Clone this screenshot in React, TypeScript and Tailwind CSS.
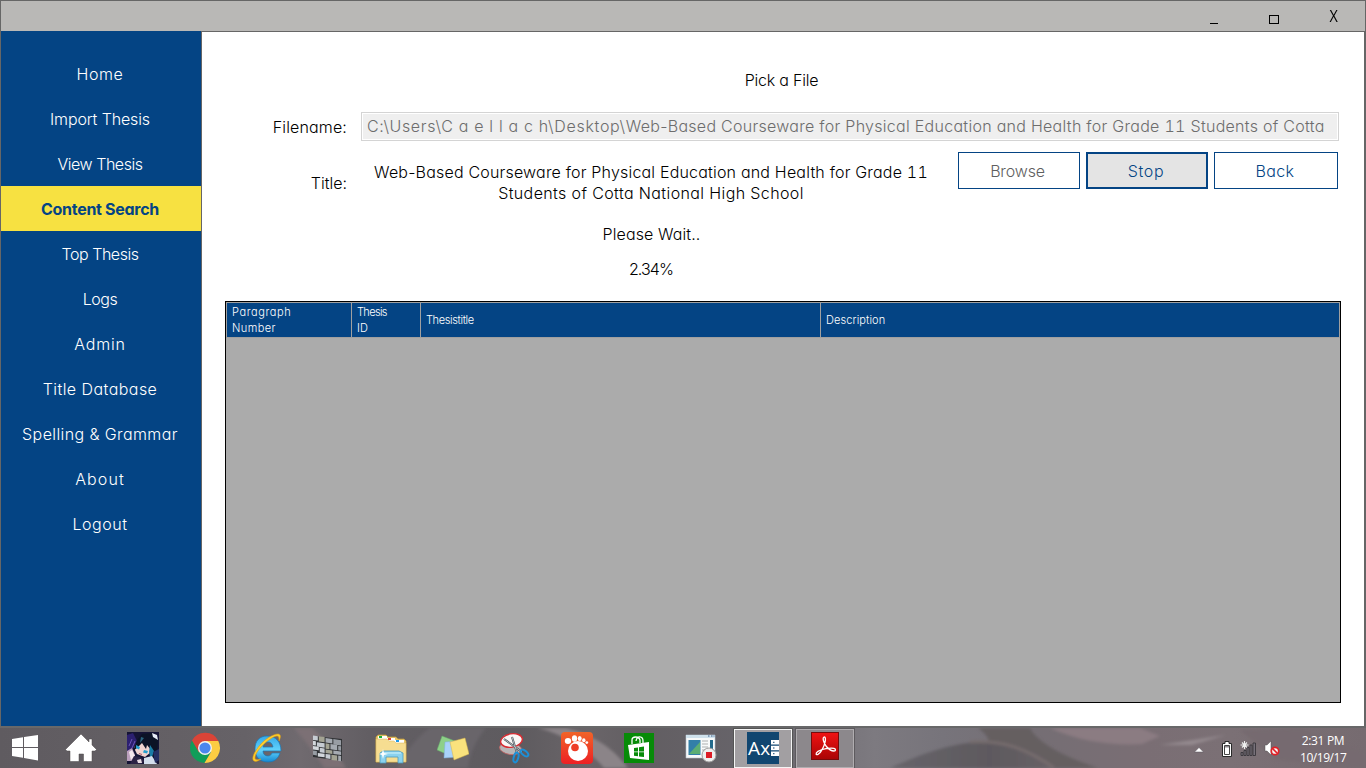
import type { ReactNode } from "react";

const navItems = [
  { label: "Home", tracking: "tracking-[0.6px]" },
  { label: "Import Thesis", tracking: "tracking-[-0.13px]" },
  { label: "View Thesis", tracking: "tracking-[-0.47px]" },
  { label: "Content Search", tracking: "tracking-[-0.3px]", active: true },
  { label: "Top Thesis", tracking: "tracking-[-0.46px]" },
  { label: "Logs", tracking: "tracking-[-0.5px]" },
  { label: "Admin", tracking: "tracking-[0.8px]" },
  { label: "Title Database", tracking: "tracking-[0.45px]" },
  { label: "Spelling & Grammar", tracking: "tracking-[0.4px]" },
  { label: "About", tracking: "tracking-[1.1px]" },
  { label: "Logout", tracking: "tracking-[0.5px]" },
];

function TitleBar() {
  return (
    <header className="flex h-[31px] shrink-0 justify-end border border-b-0 border-[#666] bg-[#b9b8b6] text-black">
      <button className="flex w-[60px] items-end justify-center pb-[7px]" aria-label="Minimize">
        <span className="h-px w-2 bg-black" />
      </button>
      <button className="flex w-[60px] items-end justify-center pb-[7px]" aria-label="Maximize">
        <span className="h-[9px] w-[10px] border border-black" />
      </button>
      <button className="flex w-[60px] items-center justify-center leading-none">
        <span className="scale-x-90 font-['Open_Sans',sans-serif] text-[16px] font-normal">X</span>
      </button>
      <span className="w-px" />
    </header>
  );
}

function Sidebar() {
  return (
    <nav className="flex w-[202px] shrink-0 flex-col border-x border-[#666] bg-[#044484] pt-5 text-white">
      {navItems.map((n) => (
        <a
          key={n.label}
          className={
            n.active
              ? "flex h-[45px] items-center justify-center bg-[#f7e141] pr-[2px] font-bold text-[#044484]"
              : "flex h-[45px] items-center justify-center pr-[2px]"
          }
        >
          <span className={n.tracking}>{n.label}</span>
        </a>
      ))}
    </nav>
  );
}

function Eleven() {
  return <span className="[font-feature-settings:'tnum']">11</span>;
}

function SearchForm() {
  return (
    <section className="flex flex-col">
      <div className="flex h-6 w-[1159px] items-center justify-center tracking-[-0.22px]">Pick a File</div>
      <div className="mt-5 flex items-center">
        <label className="w-[145px] text-right tracking-[0.15px]">Filename:</label>
        <div className="ml-[14px] h-[29px] w-[978px] border border-[#d4d4d4] bg-white p-px">
          <div className="flex h-full items-center bg-[#efefef] pb-px pl-1 whitespace-pre text-[#6d6d6d]">
            <span className="tracking-[0.68px]">C:\Users\C a e l l a c h\Desktop\</span>
            <span className="tracking-[0.28px]">
              Web-Based Courseware for Physical Education and Health for Grade <Eleven /> Students of Cotta
            </span>
          </div>
        </div>
      </div>
      <div className="mt-[11px] flex">
        <span className="mt-[19px] w-[145px] text-right">Title:</span>
        <div className="ml-[14px] flex w-[580px] flex-col items-center text-center leading-[21px] whitespace-nowrap">
          <p className="mt-[10px] tracking-[0.19px]">
            Web-Based Courseware for Physical Education and Health for Grade <Eleven />
          </p>
          <p className="tracking-[0.38px]">Students of Cotta National High School</p>
          <p className="mt-5 pl-px tracking-[0.1px]">Please Wait..</p>
          <p className="mt-[14px] tracking-[-0.93px]">2.34%</p>
        </div>
        <div className="ml-[17px] flex h-[37px] gap-[6px] text-[#044484]">
          <button className="w-[122px] border border-[#044484] bg-white pr-[3px] tracking-[-0.15px] text-[#5f5f5f]">
            Browse
          </button>
          <button className="w-[122px] border-2 border-[#044484] bg-[#e4e4e4] pr-[2px] tracking-[0.7px]">Stop</button>
          <button className="w-[124px] border border-[#044484] bg-white pr-[2px] tracking-[0.35px]">Back</button>
        </div>
      </div>
    </section>
  );
}

function ResultsGrid() {
  return (
    <section className="ml-[23px] flex h-[402px] w-[1116px] flex-col border border-black bg-[#ababab]">
      <div className="flex h-[36px] border border-[#a0a0a0] bg-[#044484] text-[11px] leading-4 text-white">
        <div className="w-[125px] border-r border-[#a0a0a0] pt-px pl-[5px]">
          <p className="tracking-[0.6px]">Paragraph</p>
          <p className="tracking-[0.4px]">Number</p>
        </div>
        <div className="w-[69px] border-r border-[#a0a0a0] pt-px pl-[5px]">
          <p className="tracking-[-0.65px]">Thesis</p>
          <p>ID</p>
        </div>
        <div className="flex w-[400px] items-center border-r border-[#a0a0a0] pl-[5px] tracking-[-0.37px]">
          Thesistitle
        </div>
        <div className="flex items-center pl-[5px] tracking-[0.1px]">Description</div>
      </div>
    </section>
  );
}

function WindowsLogo() {
  return (
    <svg className="h-7 w-7" viewBox="0 0 28 28" fill="#fff">
      <path d="M1 5 12 3.300V13H1zM13 3.100 27 1v12H13zM1 14h11v9.700L1 22zM13 14h14v12.500L13 24z" />
    </svg>
  );
}

function HomeIcon() {
  return (
    <svg className="h-8 w-8" viewBox="0 0 32 32">
      <path
        d="M16 2 0.500 17.500l1.500 1.500h3V29.500h9V22h4.500v7.500H27V19h3l1.500-1.500-4.500-4.500V7h-3v3z"
        fill="#fff"
        stroke="#4c494b"
        strokeWidth=".5"
      />
    </svg>
  );
}

function AvatarIcon() {
  return (
    <svg className="h-8 w-8" viewBox="0 0 32 32">
      <rect width="32" height="32" fill="#151435" />
      <path d="M0 3 6 1 10 9 5 18 0 19z" fill="#2c2070" />
      <path d="M5 7 2 14M8 9 5 16" stroke="#7a62c9" strokeWidth=".8" />
      <path d="M9 12 14 7l9 5 1 8-6 5-8-3-3-6z" fill="#f0d3d0" />
      <path d="M10 8 15 2l10-1 6 6-1 16-5 3-1-8-4-5-1 4-4-6-5 5-4 3z" fill="#0c1326" />
      <path d="m23 13 4 6-3 9-2-8z" fill="#1a7da6" />
      <path d="m14 5 3 1-4 5z" fill="#2b6580" />
      <path d="m25 1 5 2 1 5-5-3z" fill="#e7edf7" />
      <path d="m9 13 4 2-1 2.500-3-1.500zM17 18l4 1-1 2.500-4-1z" fill="#249fce" />
      <path d="m0 19 5-3 3 7-1 6H0z" fill="#bba0bd" />
      <path d="m2 20 3-2 3 6-4 4z" fill="#f3e6ec" />
      <path d="m7 24 6 1 5 4-4 3H3z" fill="#2c2345" />
      <path d="m10 28 4-1 1 4h-4z" fill="#e9dde3" />
      <path d="m17 26 8-2 5 8H17z" fill="#d3deec" />
      <path d="m26 20 6-3v11l-4 3z" fill="#252f63" />
      <path d="m12 21.500 3 1" stroke="#a65b6d" />
    </svg>
  );
}

function ChromeIcon() {
  return (
    <svg className="h-8 w-8" viewBox="0 0 32 32">
      <path d="M3 8.500A15 15 0 0 0 15.500 31L22 20 16 16z" fill="#109d59" />
      <path d="M3 8.500 10 20.500 16 9H29.400A15 15 0 0 0 3 8.500" fill="#da4437" />
      <path d="M29.300 9H16l6 11-6.500 11A15 15 0 0 0 29.300 9" fill="#fccd42" />
      <circle cx="16" cy="16" r="7" fill="#f3f3f1" />
      <circle cx="16" cy="16" r="5.600" fill="#4a86ef" />
    </svg>
  );
}

function ExplorerIcon() {
  return (
    <svg className="h-8 w-8" viewBox="0 0 32 32">
      <defs>
        <linearGradient id="ie" x1="0" y1="0" x2="0" y2="1">
          <stop stopColor="#35a9e8" />
          <stop offset=".55" stopColor="#62d2fb" />
          <stop offset="1" stopColor="#1589d2" />
        </linearGradient>
      </defs>
      <path
        d="M16 4C8.500 4 4 9 4 17s5 13 13 13c6 0 10-3 12-9h-8c-1 2-2 3-4 3-3 0-5-2-5-5h18C30 10 25 4 16 4m-4 11c.5-3 2-5 5-5s4.500 2 5 5z"
        fill="url(#ie)"
        stroke="#1978b9"
        strokeWidth=".7"
      />
      <path
        d="M28 9c2-4 2-7-1-7-5 0-13 5-18 11C3 20 0 27 3 29c2 1 4 0 7-2-4 1-6 1-6-1 0-4 4-9 8-13 5-5 11-9 14-9 2 0 2 2 2 5"
        fill="#ffd02c"
        stroke="#db9b15"
        strokeWidth=".6"
      />
    </svg>
  );
}

const bricks = [
  "M1 1h5v5H1z", "M7 1h6v6H7z", "M14 2h7v5h-7z", "M22 2h8v6h-8z",
  "M1 7h3v5H1z", "M5 8h8v5H5z", "M14 8h4v6h-4z", "M19 8h7v6h-7z", "M27 9h3v5h-3z",
  "M1 13h6v4H1z", "M8 14h5v5H8z", "M14 15h7v4h-7z", "M22 15h8v4h-8z",
  "M1 18h4v5H1z", "M6 20h7v4H6z", "M14 20h5v5h-5z", "M20 20h6v6h-6z", "M27 20h3v6h-3z",
];
const brickFills = ["#c6cbd2", "#a5aab1", "#d3d7dc", "#a3a393", "#989da4"];

function WallIcon() {
  return (
    <svg className="mr-0.5 h-8 w-8" viewBox="0 0 32 32">
      <path d="m1 4 29 3v22L1 25z" fill="#2f3134" />
      <g transform="matrix(.97 .13 0 .88 0 2.500)">
        {bricks.map((d, i) => (
          <path key={d} d={d} fill={brickFills[(i * 3) % 5]} />
        ))}
      </g>
    </svg>
  );
}

function FolderIcon() {
  return (
    <svg className="h-8 w-8" viewBox="0 0 32 32">
      <path d="M1 5 3 3h8l2 2h8l2 2h6l2 2v21H1z" fill="#e7c669" stroke="#c49e3f" strokeWidth=".7" />
      <path d="M3 4h9v4H3zM12 6h8v4h-8zM20 8h9v4h-9z" fill="#fff" />
      <path d="M4 4h3v2H4z" fill="#18ae38" />
      <path d="M13 6h3v2h-3z" fill="#e24235" />
      <path d="M21 8h3v2h-3z" fill="#2299e2" />
      <path d="M1 7h11l2 2h5l2 2h10v19H1z" fill="#f6dd91" stroke="#d6b359" strokeWidth=".5" />
      <path
        d="M5 31V21l3-2h16l4 2v10h-5v-6H11v6z"
        fill="#8bd2ef"
        stroke="#4b9bbb"
        strokeWidth=".8"
      />
      <path d="M7 21h19" stroke="#d2f4fc" />
      <path d="m8 17 1 4 4 1-4 1-1 4-1-4-3-1 3-1z" fill="#fff" />
    </svg>
  );
}

function NotesIcon() {
  return (
    <svg className="h-8 w-8" viewBox="0 0 32 32">
      <path d="m5 4 13 5-4 15-14-6z" fill="#8ed088" stroke="#65ab6a" strokeWidth=".5" />
      <path d="m8 10 14-1-1 16-14 1z" fill="#a9d2fa" stroke="#7eb0db" strokeWidth=".5" />
      <path d="m13 10 15-4 4 16-15 6z" fill="#fae27d" stroke="#d0b24c" strokeWidth=".5" />
    </svg>
  );
}

function SnipIcon() {
  return (
    <svg className="h-8 w-8" viewBox="0 0 32 32">
      <ellipse cx="11.500" cy="16.500" rx="11" ry="6" fill="#b8b5b6" stroke="#c96464" strokeWidth=".8" transform="rotate(8 11.500 16.500)" />
      <ellipse cx="12.500" cy="8.500" rx="11" ry="6.700" fill="#f9f7f6" stroke="#d82c32" strokeWidth="1.400" transform="rotate(-10 12.500 8.500)" />
      <path d="m5 7 18 13M13 5l5 16" stroke="#454b50" strokeWidth="2" />
      <path d="m5 7 18 13M13 5l5 16" stroke="#c8d0d5" strokeWidth=".8" />
      <ellipse cx="17" cy="25.500" rx="2.300" ry="5" transform="rotate(15 17 25.500)" fill="none" stroke="#1c8fd7" strokeWidth="2" />
      <ellipse cx="25.500" cy="21" rx="2.300" ry="4.500" transform="rotate(-50 25.500 21)" fill="none" stroke="#1c8fd7" strokeWidth="2" />
    </svg>
  );
}

function GomIcon() {
  return (
    <svg className="h-8 w-8" viewBox="0 0 32 32">
      <defs>
        <linearGradient id="gom" x1="0" y1="0" x2="0" y2="1">
          <stop stopColor="#f16428" />
          <stop offset="1" stopColor="#ed2024" />
        </linearGradient>
      </defs>
      <rect width="32" height="32" rx="4" fill="url(#gom)" />
      <g fill="#fff">
        <circle cx="17" cy="19" r="10" />
        <ellipse cx="7" cy="9" rx="3.200" ry="3" />
        <ellipse cx="13.500" cy="6.500" rx="2.600" ry="3.200" />
        <ellipse cx="18.700" cy="6.500" rx="2" ry="2.600" />
        <ellipse cx="22.800" cy="8.200" rx="1.700" ry="2" />
        <circle cx="25.800" cy="10.600" r="1.400" />
      </g>
      <circle cx="14" cy="15.500" r="3.800" fill="#ee3e27" />
    </svg>
  );
}

function StoreIcon() {
  return (
    <svg className="h-[30px] w-[30px]" viewBox="0 0 30 30">
      <rect width="30" height="30" fill="#078b08" />
      <path d="M8 11V7c0-4 7-4 8 0v3M12 8c1-6 7-5 7 0v2" fill="none" stroke="#fff" strokeWidth="1.300" />
      <path d="m4 12 21-3v18L6 25z" fill="#fff" />
      <path d="m10 15 4-.6v4h-4zM15 14.200l5-.7v4.900h-5zM10 19.300h4v4l-4-.5zM15 19.300h5v4.800l-5-.7z" fill="#078b08" />
    </svg>
  );
}

function RecorderIcon() {
  return (
    <svg className="h-8 w-8" viewBox="0 0 32 32">
      <path d="M1 3h29v23H1z" fill="#f8fafa" stroke="#b5c4cc" strokeWidth=".6" />
      <path d="M1 3h29v3H1z" fill="#cfe2ed" />
      <path d="M23 4h1.500M26 4h1.500M28.500 4h1" stroke="#3b5d88" />
      <path d="M3.500 8h12v15h-12z" fill="#327fa8" />
      <path d="m4 22 11-12v12z" fill="#5cae73" />
      <path d="M17 9h6M17 12h6M17 15h6M17 18h3" stroke="#aeb1b2" />
      <path d="M25 8h3v9h-3z" fill="#236a8b" />
      <circle cx="24" cy="23" r="7" fill="#eee" stroke="#9c9c9c" />
      <rect x="21" y="20" width="6" height="6" fill="#dc1b25" />
    </svg>
  );
}

function AxIcon() {
  return (
    <div className="flex h-8 w-8 items-center bg-[#114670] text-white">
      <span className="w-6 pl-px font-['Open_Sans',sans-serif] text-[19px] leading-none font-normal tracking-[0.2px]">
        Ax
      </span>
      <svg className="h-4 w-2" viewBox="0 0 8 16">
        <path d="M0 0h8v4.600H0zM0 5.700h8v4.600H0zM0 11.400h8V16H0z" fill="#fff" />
        <path d="M2 2.300h1.500M2 8h1.500M2 13.700h1.500" stroke="#114670" />
      </svg>
    </div>
  );
}

function ReaderIcon() {
  return (
    <svg className="h-7 w-7" viewBox="0 0 28 28">
      <defs>
        <linearGradient id="pdf" x1="0" y1="0" x2="0" y2="1">
          <stop stopColor="#f01313" />
          <stop offset="1" stopColor="#a90505" />
        </linearGradient>
      </defs>
      <rect x=".5" y=".5" width="27" height="27" fill="url(#pdf)" stroke="#770b0b" />
      <path
        d="M13 5c-2 1 0 6 2 9 2 2.500 5 5 8 5 2 0 2-2 0-2.600-4-.8-12 .6-16 3-3 2-2 4 0 3 3-1.500 6-8 7-12 .8-3 .5-5.800-1-5.400"
        fill="none"
        stroke="#fff"
        strokeWidth="1.300"
      />
    </svg>
  );
}

function Slot({ children }: { children: ReactNode }) {
  return <div className="flex h-10 w-[62px] items-center justify-center">{children}</div>;
}

function Tray() {
  return (
    <div className="flex h-full items-center">
      <svg className="mt-1 h-[6px] w-[10px]" viewBox="0 0 10 6">
        <path d="m.5 5 4.500-4.500L9.500 5z" fill="#fff" stroke="#58565c" strokeWidth=".5" />
      </svg>
      <svg className="mt-0.5 ml-[18px] h-4 w-[10px]" viewBox="0 0 10 16">
        <path d="M3 .5h4v2h2.500v13H.500v-13H3z" fill="#fff" stroke="#292929" />
        <path d="M2.500 4.500h5v9h-5z" fill="#fff" stroke="#444" />
        <path d="M3 5h4v1.500H3z" fill="#918b90" />
      </svg>
      <svg className="ml-2 h-[15px] w-4" viewBox="0 0 16 15">
        <path
          d="M1 11.500h2v3H1zM4 9.500h2v5H4zM7 6.500h2v8H7zM10 4h2v10.500h-2zM13 2h2.500v12.500H13z"
          fill="#77717a"
          stroke="#38363b"
          strokeWidth=".9"
        />
        <path d="M4.500 0v8M.500 4h8M2 1.500l5 5M7 1.500l-5 5" stroke="#eee" strokeWidth="1.100" />
      </svg>
      <svg className="ml-2 h-4 w-4" viewBox="0 0 16 16">
        <path d="M1 5h2l4-4v14l-4-4H1z" fill="#fff" stroke="#555" strokeWidth=".5" />
        <circle cx="11" cy="11" r="3.700" fill="#f5f5f5" stroke="#e22126" strokeWidth="1.700" />
        <path d="m8.500 8.500 5 5" stroke="#e22126" strokeWidth="1.700" />
      </svg>
      <div className="ml-5 w-[46px] pt-px text-center font-['Open_Sans',sans-serif] text-[12px] leading-[17px] font-normal whitespace-nowrap text-white">
        <p className="tracking-[-0.35px]">2:31 PM</p>
        <p className="tracking-[-0.45px]">10/19/17</p>
      </div>
    </div>
  );
}

function TaskbarWallpaper() {
  return (
    <svg className="absolute inset-0 h-[40px] w-[1366px]" viewBox="0 0 1366 40" preserveAspectRatio="none">
      <defs>
        <linearGradient id="hill" x1="0" y1="0" x2="1" y2="0">
          <stop stopColor="#67646a" />
          <stop offset=".6" stopColor="#5d595e" />
          <stop offset="1" stopColor="#686166" />
        </linearGradient>
        <filter id="soft" x="-10%" y="-30%" width="120%" height="160%">
          <feGaussianBlur stdDeviation="1.5" />
        </filter>
      </defs>
      <g filter="url(#soft)">
        <path d="M294 0c12 14 22 27 30 40h22c-10-16-20-28-34-40z" fill="#7b7075" />
        <path d="M430 0c-14 10-25 24-32 40h70c2-16 8-28 18-40z" fill="#69656a" />
        <path d="M538 0c24 6 50 20 66 40h24c-16-22-38-34-62-40z" fill="#8b8488" />
        <path d="M978 0c8 6 12 11 10 16-8 6 30 18 60 24l50 0c-30-10-60-24-68-40z" fill="#655f60" />
        <path d="M890 40c40-18 72-28 106-26 30 4 48 14 60 26z" fill="url(#hill)" />
        <path d="M970 14c32-2 56 6 84 26" fill="none" stroke="#766c6d" strokeWidth="3" />
        <path d="M1050 0c30 14 66 18 92 16L1160 8l-20-8z" fill="#8b7c82" />
        <path d="m1160 17 66-10-34 10z" fill="#948a8f" />
        <path d="m1240 2 60-2 66 24v16l-90-8z" fill="#766b70" />
      </g>
    </svg>
  );
}

function Taskbar() {
  return (
    <footer className="relative flex h-[42px] shrink-0 items-center justify-between border-t-2 border-[#686869] bg-[linear-gradient(90deg,#5f5b60_0%,#666267_18%,#706a6f_22%,#625e63_27%,#5e5b5f_38%,#6a6569_43%,#625e62_47%,#67646a_55%,#7d7a80_64%,#77747b_69%,#756e74_76%,#7a6e74_84%,#7b7075_90%,#766b70_100%)]">
      <TaskbarWallpaper />
      <div className="relative flex items-center">
        <div className="flex w-[50px] justify-center">
          <WindowsLogo />
        </div>
        <Slot><HomeIcon /></Slot>
        <Slot><AvatarIcon /></Slot>
        <Slot><ChromeIcon /></Slot>
        <Slot><ExplorerIcon /></Slot>
        <Slot><WallIcon /></Slot>
        <Slot><FolderIcon /></Slot>
        <Slot><NotesIcon /></Slot>
        <Slot><SnipIcon /></Slot>
        <Slot><GomIcon /></Slot>
        <Slot><StoreIcon /></Slot>
        <Slot><RecorderIcon /></Slot>
        <Slot>
          <div className="flex h-[39px] w-[58px] items-center justify-center border border-[#f4f4f4] bg-[#a29fa2] outline outline-[#555]">
            <AxIcon />
          </div>
        </Slot>
        <Slot>
          <div className="flex h-[39px] w-[58px] items-center justify-center border border-[#b0adb0] bg-[#8c888c] pb-1 outline outline-[#5d5a5e]">
            <ReaderIcon />
          </div>
        </Slot>
      </div>
      <div className="relative pr-[20px]">
        <Tray />
      </div>
    </footer>
  );
}

export default function App() {
  return (
    <div className="flex h-[768px] w-[1366px] flex-col overflow-hidden bg-[#666] font-['Inter','Liberation_Sans',sans-serif] text-[16px] leading-6 font-light text-black [font-feature-settings:'cv11']">
      <TitleBar />
      <div className="flex h-[695px] shrink-0">
        <Sidebar />
        <main className="flex w-[1162px] flex-col border-t border-[#666] bg-white pt-[36px]">
          <SearchForm />
          <div className="mt-auto pb-[23px]">
            <ResultsGrid />
          </div>
        </main>
      </div>
      <Taskbar />
    </div>
  );
}
